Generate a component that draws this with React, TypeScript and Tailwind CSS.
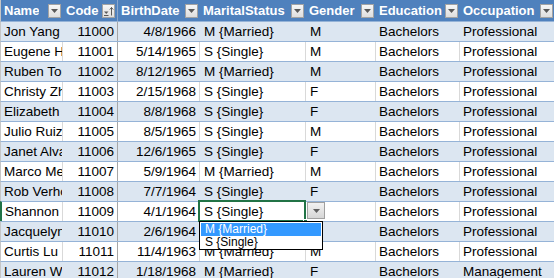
import React from "react";

type Row = {
  name: string;
  code: string;
  birth: string;
  status: string;
  gender: string;
  education: string;
  occupation: string;
};

const rows: Row[] = [
  { name: "Jon Yang", code: "11000", birth: "4/8/1966", status: "M {Married}", gender: "M", education: "Bachelors", occupation: "Professional" },
  { name: "Eugene Huang", code: "11001", birth: "5/14/1965", status: "S {Single}", gender: "M", education: "Bachelors", occupation: "Professional" },
  { name: "Ruben Torres", code: "11002", birth: "8/12/1965", status: "M {Married}", gender: "M", education: "Bachelors", occupation: "Professional" },
  { name: "Christy Zhu", code: "11003", birth: "2/15/1968", status: "S {Single}", gender: "F", education: "Bachelors", occupation: "Professional" },
  { name: "Elizabeth Johnson", code: "11004", birth: "8/8/1968", status: "S {Single}", gender: "F", education: "Bachelors", occupation: "Professional" },
  { name: "Julio Ruiz", code: "11005", birth: "8/5/1965", status: "S {Single}", gender: "M", education: "Bachelors", occupation: "Professional" },
  { name: "Janet Alvarez", code: "11006", birth: "12/6/1965", status: "S {Single}", gender: "F", education: "Bachelors", occupation: "Professional" },
  { name: "Marco Mehta", code: "11007", birth: "5/9/1964", status: "M {Married}", gender: "M", education: "Bachelors", occupation: "Professional" },
  { name: "Rob Verhoff", code: "11008", birth: "7/7/1964", status: "S {Single}", gender: "F", education: "Bachelors", occupation: "Professional" },
  { name: "Shannon Carlson", code: "11009", birth: "4/1/1964", status: "S {Single}", gender: "M", education: "Bachelors", occupation: "Professional" },
  { name: "Jacquelyn Suarez", code: "11010", birth: "2/6/1964", status: "S {Single}", gender: "F", education: "Bachelors", occupation: "Professional" },
  { name: "Curtis Lu", code: "11011", birth: "11/4/1963", status: "M {Married}", gender: "M", education: "Bachelors", occupation: "Professional" },
  { name: "Lauren Walker", code: "11012", birth: "1/18/1968", status: "M {Married}", gender: "F", education: "Bachelors", occupation: "Management" },
];

function FilterButton({ sorted = false }: { sorted?: boolean }) {
  return (
    <div className="flex h-[14px] w-[13px] shrink-0 items-center justify-center border border-[#a3a3a3] bg-gradient-to-b from-[#f7f7f7] to-[#dedede]">
      {sorted ? (
        <svg width="11" height="12" viewBox="0 0 11 12">
          <path d="M1 6.5h4.5L3.25 9z" fill="#595959" />
          <path d="M1 10.5h4.5" stroke="#595959" strokeWidth="1" />
          <path d="M8.5 10.5V2.5M6.8 4.5l1.7-2 1.7 2" stroke="#595959" strokeWidth="1" fill="none" />
        </svg>
      ) : (
        <svg width="9" height="6" viewBox="0 0 9 6">
          <path d="M1 1h7L4.5 5z" fill="#595959" />
        </svg>
      )}
    </div>
  );
}

function HeaderCell({ label, width, sorted }: { label: string; width: string; sorted?: boolean }) {
  return (
    <div className={`${width} flex h-full shrink-0 items-center justify-between pl-[3px] pr-[2px]`}>
      <span className="overflow-hidden whitespace-nowrap text-[13px] font-bold text-white">{label}</span>
      <FilterButton sorted={sorted} />
    </div>
  );
}

export default function App() {
  return (
    <div
      className="h-[278px] w-[554px] overflow-hidden bg-white text-[13.5px] leading-[19px] text-black"
      style={{ fontFamily: '"Liberation Sans", Arial, sans-serif' }}
    >
      <div className="flex h-[21px] border-l border-[#c6c6c6] bg-[#4F81BD]">
        <HeaderCell label="Name" width="w-[62px]" />
        <HeaderCell label="Code" width="w-[55px] border-r border-[#8aa6cc]" sorted />
        <HeaderCell label="BirthDate" width="w-[82px]" />
        <HeaderCell label="MaritalStatus" width="w-[106px]" />
        <HeaderCell label="Gender" width="w-[70px]" />
        <HeaderCell label="Education" width="w-[84px]" />
        <HeaderCell label="Occupation" width="w-[95px]" />
      </div>

      {rows.map((r, i) => {
        const band = i % 2 === 0;
        const selected = i === 9;
        const grid = band ? "border-[#DCE6F1]" : "border-[#d9d9d9]";
        return (
          <div
            key={r.code}
            className={`flex h-[20px] border-t border-[#95B3D7] ${band ? "bg-[#DCE6F1]" : "bg-white"} ${
              selected ? "border-l-2 border-l-[#217346]" : "border-l border-l-[#c6c6c6]"
            }`}
          >
            <div className={`${selected ? "w-[61px]" : "w-[62px]"} shrink-0 overflow-hidden whitespace-nowrap border-r pl-[3px] ${grid}`}>
              {r.name}
            </div>
            <div className="w-[55px] shrink-0 border-r border-[#a6a6a6] pr-[3px] text-right">{r.code}</div>
            <div className={`w-[82px] shrink-0 border-r pr-[3px] text-right ${grid}`}>{r.birth}</div>
            <div className={`relative w-[106px] shrink-0 whitespace-nowrap border-r pl-[4px] ${grid}`}>
              {r.status}
              {selected && (
                <>
                  <div className="pointer-events-none absolute -top-[2px] -left-[2px] h-[22px] w-[108px] border-2 border-[#217346]" />
                  <div className="absolute -right-[3px] top-[17px] h-[5px] w-[5px] border border-white bg-[#217346]" />
                  <div className="absolute top-0 left-[107px] z-10 flex h-[17px] w-[18px] items-center justify-center border border-[#a0a0a0] bg-gradient-to-b from-[#f2f2f2] to-[#d6d6d6]">
                    <svg width="9" height="6" viewBox="0 0 9 6">
                      <path d="M1 1h7L4.5 5z" fill="#606060" />
                    </svg>
                  </div>
                  <div className="absolute top-[19px] -left-[1px] z-20 w-[124px] border border-black bg-white p-px text-[12px] leading-[12.5px]">
                    <div className="bg-[#3399FF] pl-[4px] text-white">M {"{Married}"}</div>
                    <div className="pl-[4px]">S {"{Single}"}</div>
                  </div>
                </>
              )}
            </div>
            <div className={`w-[70px] shrink-0 border-r pl-[4px] ${grid}`}>{r.gender}</div>
            <div className={`w-[84px] shrink-0 border-r pl-[3px] ${grid}`}>{r.education}</div>
            <div className="w-[95px] shrink-0 whitespace-nowrap pl-[3px]">{r.occupation}</div>
          </div>
        );
      })}
    </div>
  );
}
